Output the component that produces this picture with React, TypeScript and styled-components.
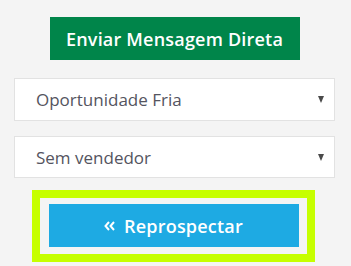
import React from "react";
import styled, { createGlobalStyle } from "styled-components";

const GlobalStyle = createGlobalStyle`
  html, body {
    margin: 0;
    padding: 0;
    background: #f4f4f4;
  }
`;

const Panel = styled.div`
  width: 321px;
  padding: 17px 0 0 14px;
  display: flex;
  flex-direction: column;
  align-items: center;
`;

const ActionButton = styled.button<{ $bg: string }>`
  width: 250px;
  height: 43px;
  border: none;
  border-radius: 0;
  background: ${({ $bg }) => $bg};
  color: #fff;
  font-family: "Open Sans", "Liberation Sans", sans-serif;
  font-weight: 600;
  font-size: 18px;
  letter-spacing: 0.2px;
  display: flex;
  align-items: center;
  justify-content: center;
  gap: 9px;
  padding: 0;
  cursor: pointer;
`;

const SelectBox = styled.div<{ $height: number; $top: number }>`
  box-sizing: border-box;
  width: 321px;
  height: ${({ $height }) => $height}px;
  margin-top: ${({ $top }) => $top}px;
  background: #fff;
  border: 1px solid #e2e2e2;
  display: flex;
  align-items: center;
  justify-content: space-between;
  padding: 0 10px 0 21px;
  font-family: "Open Sans", "Liberation Sans", sans-serif;
  font-size: 17px;
  color: #545460;
`;

const Caret = styled.span`
  width: 0;
  height: 0;
  border-left: 3.5px solid transparent;
  border-right: 3.5px solid transparent;
  border-top: 7px solid #4a4a4a;
`;

const Highlight = styled.div`
  margin-top: 12px;
  margin-left: -2px;
  box-sizing: border-box;
  width: 283px;
  border: 8px solid #c6ff00;
  padding: 6px 0 7px;
  display: flex;
  justify-content: center;
`;

const Chevrons = styled.svg`
  width: 11px;
  height: 10px;
  margin-top: 1px;
`;

export default function App() {
  return (
    <>
      <GlobalStyle />
      <Panel>
        <ActionButton $bg="#00854a">Enviar Mensagem Direta</ActionButton>
        <SelectBox $height={43} $top={18}>
          <span>Oportunidade Fria</span>
          <Caret />
        </SelectBox>
        <SelectBox $height={42} $top={15}>
          <span>Sem vendedor</span>
          <Caret />
        </SelectBox>
        <Highlight>
          <ActionButton $bg="#1eaae3">
            <Chevrons viewBox="0 0 11 10">
              <path
                d="M5 1 L1.5 5 L5 9 M10 1 L6.5 5 L10 9"
                fill="none"
                stroke="#fff"
                strokeWidth="2"
              />
            </Chevrons>
            Reprospectar
          </ActionButton>
        </Highlight>
      </Panel>
    </>
  );
}
